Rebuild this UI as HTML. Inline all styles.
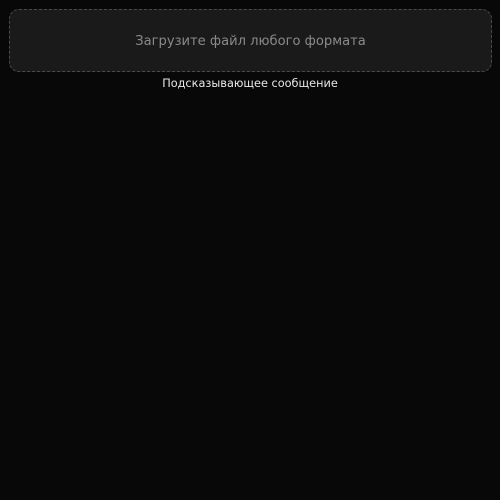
<!DOCTYPE html>
<html><head><meta charset="utf-8"><style>
html,body{margin:0;padding:0;width:500px;height:500px;background:#080808;overflow:hidden;font-family:"DejaVu Sans","Liberation Sans",sans-serif;}
.box{position:absolute;left:9px;top:9px;width:483px;height:63px;box-sizing:border-box;border:1px dashed #4a4a4a;border-radius:10px;background:#1a1a1a;display:flex;align-items:center;justify-content:center;color:#8a8a8a;font-size:13.1px;padding-top:2px;}
.hint{position:absolute;left:0;width:500px;top:77px;text-align:center;color:#e8e8e8;font-size:11.3px;}
</style></head><body>
<div class="box">Загрузите файл любого формата</div>
<div class="hint">Подсказывающее сообщение</div>
</body></html>
